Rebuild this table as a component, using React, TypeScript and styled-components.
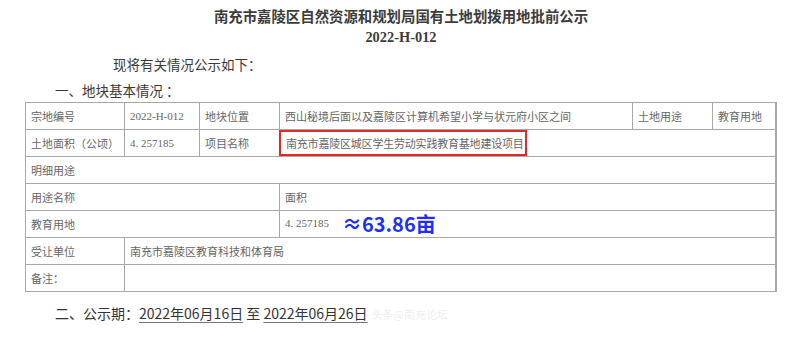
import styled, { createGlobalStyle } from "styled-components";

const GlobalStyle = createGlobalStyle`
  html, body {
    margin: 0;
    padding: 0;
    background: #ffffff;
  }
  body {
    font-family: "Noto Sans CJK SC", "Noto Sans", sans-serif;
    color: #333;
  }
`;

const Page = styled.div`
  width: 796px;
  height: 344px;
  padding-top: 7px;
  box-sizing: border-box;
  overflow: hidden;
`;

const Title = styled.h1`
  margin: 0;
  text-align: center;
  font-family: "Liberation Serif", "Noto Sans CJK SC", serif;
  font-size: 14.4px;
  font-weight: 700;
  line-height: 20px;
  color: #3c3c3c;
  padding-left: 6px;
`;

const Paragraph = styled.p<{ $indent: number; $gap: number }>`
  margin: ${({ $gap }) => $gap}px 0 0;
  padding-left: ${({ $indent }) => $indent}px;
  font-size: 13.5px;
  line-height: 20px;
  color: #3a3a3a;
`;

const Table = styled.table`
  margin: 2px 0 0 25px;
  width: 750px;
  border-collapse: collapse;
  table-layout: fixed;
  border-right: 2px solid #aaa;
`;

const Cell = styled.td<{ $plain?: boolean }>`
  border: 1px solid #a8a8a8;
  height: 26px;
  padding: ${({ $plain }) => ($plain ? "0" : "0 5px")};
  font-family: "Liberation Serif", "Noto Sans CJK SC", serif;
  font-size: 11px;
  color: #666;
  white-space: nowrap;
  vertical-align: middle;
`;

const Marked = styled.div`
  display: inline-flex;
  align-items: center;
  width: 248px;
  height: 26px;
  padding: 0 5px;
  border: 2px solid #e02a2a;
  box-sizing: border-box;
  margin: -1px 0 -1px -1px;
  letter-spacing: -0.2px;
`;

const Approx = styled.span`
  margin-left: 13px;
  font-family: "Noto Sans CJK SC", sans-serif;
  font-size: 20px;
  font-weight: 700;
  color: #1f2dff;
  vertical-align: middle;
  line-height: 20px;
`;

const Period = styled.p`
  margin: 11px 0 0;
  padding-left: 55px;
  font-size: 14px;
  line-height: 20px;
  color: #333;
`;

const DateText = styled.span`
  text-decoration: underline;
  text-underline-offset: 3px;
  text-decoration-color: #777;
`;

const Watermark = styled.span`
  margin-left: 4px;
  font-size: 11px;
  color: #eeeeee;
`;

const cols = [99, 75, 80, 353, 80, 63];

export default function App() {
  return (
    <Page>
      <GlobalStyle />
      <Title>南充市嘉陵区自然资源和规划局国有土地划拨用地批前公示</Title>
      <Title>2022-H-012</Title>
      <Paragraph $indent={113} $gap={7}>
        现将有关情况公示如下：
      </Paragraph>
      <Paragraph $indent={55} $gap={6}>
        一、地块基本情况 ：
      </Paragraph>
      <Table>
        <colgroup>
          {cols.map((w, i) => (
            <col key={i} style={{ width: w }} />
          ))}
        </colgroup>
        <tbody>
          <tr>
            <Cell>宗地编号</Cell>
            <Cell>2022-H-012</Cell>
            <Cell>地块位置</Cell>
            <Cell>西山秘境后面以及嘉陵区计算机希望小学与状元府小区之间</Cell>
            <Cell>土地用途</Cell>
            <Cell>教育用地</Cell>
          </tr>
          <tr>
            <Cell>土地面积（公顷）</Cell>
            <Cell>4. 257185</Cell>
            <Cell>项目名称</Cell>
            <Cell colSpan={3} $plain>
              <Marked>南充市嘉陵区城区学生劳动实践教育基地建设项目</Marked>
            </Cell>
          </tr>
          <tr>
            <Cell colSpan={6}>明细用途</Cell>
          </tr>
          <tr>
            <Cell colSpan={3}>用途名称</Cell>
            <Cell colSpan={3}>面积</Cell>
          </tr>
          <tr>
            <Cell colSpan={3}>教育用地</Cell>
            <Cell colSpan={3}>
              4. 257185<Approx>≈63.86亩</Approx>
            </Cell>
          </tr>
          <tr>
            <Cell>受让单位</Cell>
            <Cell colSpan={5}>南充市嘉陵区教育科技和体育局</Cell>
          </tr>
          <tr>
            <Cell>备注：</Cell>
            <Cell colSpan={5}></Cell>
          </tr>
        </tbody>
      </Table>
      <Period>
        二、公示期：<DateText>2022年06月16日</DateText> 至{" "}
        <DateText>2022年06月26日</DateText>
        <Watermark>头条@南充论坛</Watermark>
      </Period>
    </Page>
  );
}
